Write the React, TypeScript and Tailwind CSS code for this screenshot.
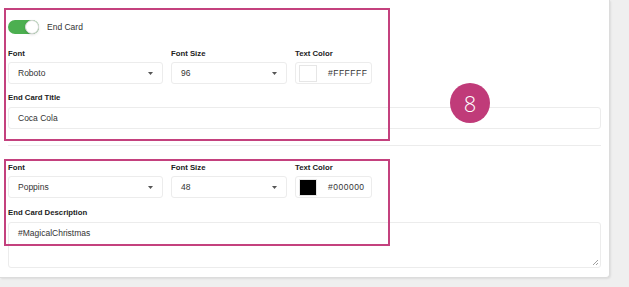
import React from "react";

const Caret = () => (
  <svg width="5" height="3" viewBox="0 0 5 3" className="fill-[#555]">
    <path d="M0 0 L5 0 L2.5 3 Z" />
  </svg>
);

const Select = ({ value, width }: { value: string; width: string }) => (
  <div className={`${width} h-[22px] border border-[#ececec] rounded-[3px] flex items-center justify-between pl-[9px] pr-[9px] text-[8.5px] text-[#333]`}>
    <span>{value}</span>
    <Caret />
  </div>
);

const ColorField = ({ swatch, hex }: { swatch: string; hex: string }) => (
  <div className="w-[77px] h-[22px] border border-[#ececec] rounded-[3px] flex items-center pl-[3px] text-[8.5px] text-[#333]">
    <div className={`w-[18px] h-[17px] border border-[#e6e6e6] ${swatch}`} />
    <span className="ml-[11px] tracking-[0.5px]">{hex}</span>
  </div>
);

const Label = ({ children, className = "" }: { children: React.ReactNode; className?: string }) => (
  <div className={`text-[7.75px] font-bold text-[#222] leading-[14px] ${className}`}>{children}</div>
);

const FontRow = ({ font, size, swatch, hex }: { font: string; size: string; swatch: string; hex: string }) => (
  <div className="flex gap-2">
    <div className="flex flex-col gap-px">
      <Label>Font</Label>
      <Select value={font} width="w-[155px]" />
    </div>
    <div className="flex flex-col gap-px">
      <Label>Font Size</Label>
      <Select value={size} width="w-[116px]" />
    </div>
    <div className="flex flex-col gap-px">
      <Label>Text Color</Label>
      <ColorField swatch={swatch} hex={hex} />
    </div>
  </div>
);

export default function App() {
  return (
    <div
      className="relative w-[629px] h-[287px] bg-[#efefef] overflow-hidden"
      style={{ fontFamily: "'Liberation Sans', Arial, sans-serif" }}
    >
      {/* Panel */}
      <div className="w-[610px] h-[278px] bg-white rounded-br-[4px] border-r border-b border-[#dcdcdc] shadow-[1px_1px_2px_rgba(0,0,0,0.08)] px-2 pt-[20px]">
        {/* Toggle */}
        <div className="flex items-center gap-2 h-[14px]">
          <div className="w-[31px] h-[14px] rounded-full bg-[#4caf50] relative">
            <div className="absolute right-0 top-0 w-[14px] h-[14px] rounded-full bg-white border border-[#d8d8d8] shadow-sm" />
          </div>
          <span className="text-[8.5px] leading-[14px] text-[#333]">End Card</span>
        </div>

        <div className="mt-[13px]">
          <FontRow font="Roboto" size="96" swatch="bg-white" hex="#FFFFFF" />
        </div>

        <Label className="mt-[7px]">End Card Title</Label>
        <div className="mt-[2px] h-[22px] border border-[#ececec] rounded-[3px] flex items-center pl-[9px] text-[8.5px] text-[#333]">
          Coca Cola
        </div>

        <div className="mt-[16px] h-px bg-[#ececec]" />

        <div className="mt-[15px]">
          <FontRow font="Poppins" size="48" swatch="bg-black" hex="#000000" />
        </div>

        <Label className="mt-[8px]">End Card Description</Label>
        <div className="mt-[2px] h-[46px] border border-[#ececec] rounded-[3px] pl-[9px] pt-[4px] text-[8.5px] leading-[12px] text-[#333] relative">
          #MagicalChristmas
          <svg width="7" height="7" viewBox="0 0 7 7" className="absolute right-[1px] bottom-[1px] stroke-[#888]">
            <path d="M1 6 L6 1 M4 6 L6 4" strokeWidth="0.8" />
          </svg>
        </div>
      </div>

      {/* Annotation overlays */}
      <div className="absolute left-[4px] top-[8px] w-[386px] h-[133px] border-2 border-[#c4417e]" />
      <div className="absolute left-[4px] top-[159px] w-[386px] h-[87px] border-2 border-[#c4417e]" />
      <div
        className="absolute left-[450px] top-[83px] w-[40px] h-[40px] rounded-full bg-[#c03b79] flex items-center justify-center text-white text-[22px]"
        style={{ fontFamily: "'Open Sans', sans-serif", fontWeight: 300 }}
      >
        8
      </div>
    </div>
  );
}
